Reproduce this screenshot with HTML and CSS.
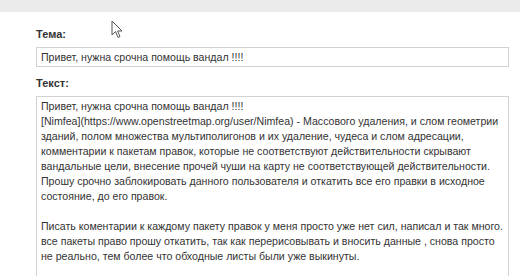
FILE: index.html
```html
<!DOCTYPE html>
<html lang="ru">
<head>
    <meta charset="UTF-8">
    <title>Сообщение</title>
    <link rel="stylesheet" href="styles.css">
</head>
<body>

<div class="topbar"></div>

<div class="form">
    <label for="subject">Тема:</label>
    <input type="text" id="subject" value="Привет, нужна срочна помощь вандал !!!!">

    <label for="body">Текст:</label>
    <div class="textarea" id="body">Привет, нужна срочна помощь вандал !!!!
[Nimfea](https://www.openstreetmap.org/user/Nimfea) - Массового удаления, и слом геометрии
зданий, полом множества мультиполигонов и их удаление, чудеса и слом адресации,
комментарии к пакетам правок, которые не соответствуют действительности скрывают
вандальные цели, внесение прочей чуши на карту не соответствующей действительности.
Прошу срочно заблокировать данного пользователя и откатить все его правки в исходное
состояние, до его правок.

Писать коментарии к каждому пакету правок у меня просто уже нет сил, написал и так много.
все пакеты право прошу откатить, так как перерисовывать и вносить данные , снова просто
не реально, тем более что обходные листы были уже выкинуты.</div>
</div>

<svg class="cursor" width="12" height="19" viewBox="0 0 12 19">
    <path d="M1 1 L1 15 L4.5 11.5 L7 17.5 L9 16.6 L6.6 11 L11 11 Z" fill="#fff" stroke="#555" stroke-width="1"/>
</svg>

</body>
</html>
```

FILE: styles.css
```css
body {
    margin: 0;
    height: 276px;
    font-family: "Liberation Sans", Arial, sans-serif;
    color: #333;
    background: #fff;
    overflow: hidden;
}
.topbar {
    height: 12px;
    background-color: #ebebeb;
}
.form {
    padding: 15px 11px 0 36px;
}
label {
    display: block;
    font-size: 11px;
    font-weight: bold;
    line-height: 14px;
    margin-bottom: 6px;
}
input[type="text"] {
    display: block;
    box-sizing: border-box;
    width: 100%;
    height: 20px;
    margin: 0 0 9px;
    padding: 0 4px;
    border: 1px solid #d2d2d2;
    font-family: inherit;
    font-size: 10.6px;
    color: #333;
}
.textarea {
    box-sizing: border-box;
    width: 100%;
    height: 182px;
    padding: 2px 4px;
    border: 1px solid #d2d2d2;
    border-bottom: none;
    font-size: 10.6px;
    line-height: 15px;
    white-space: pre;
    overflow: hidden;
}
.cursor {
    position: absolute;
    left: 111px;
    top: 20px;
}
```
